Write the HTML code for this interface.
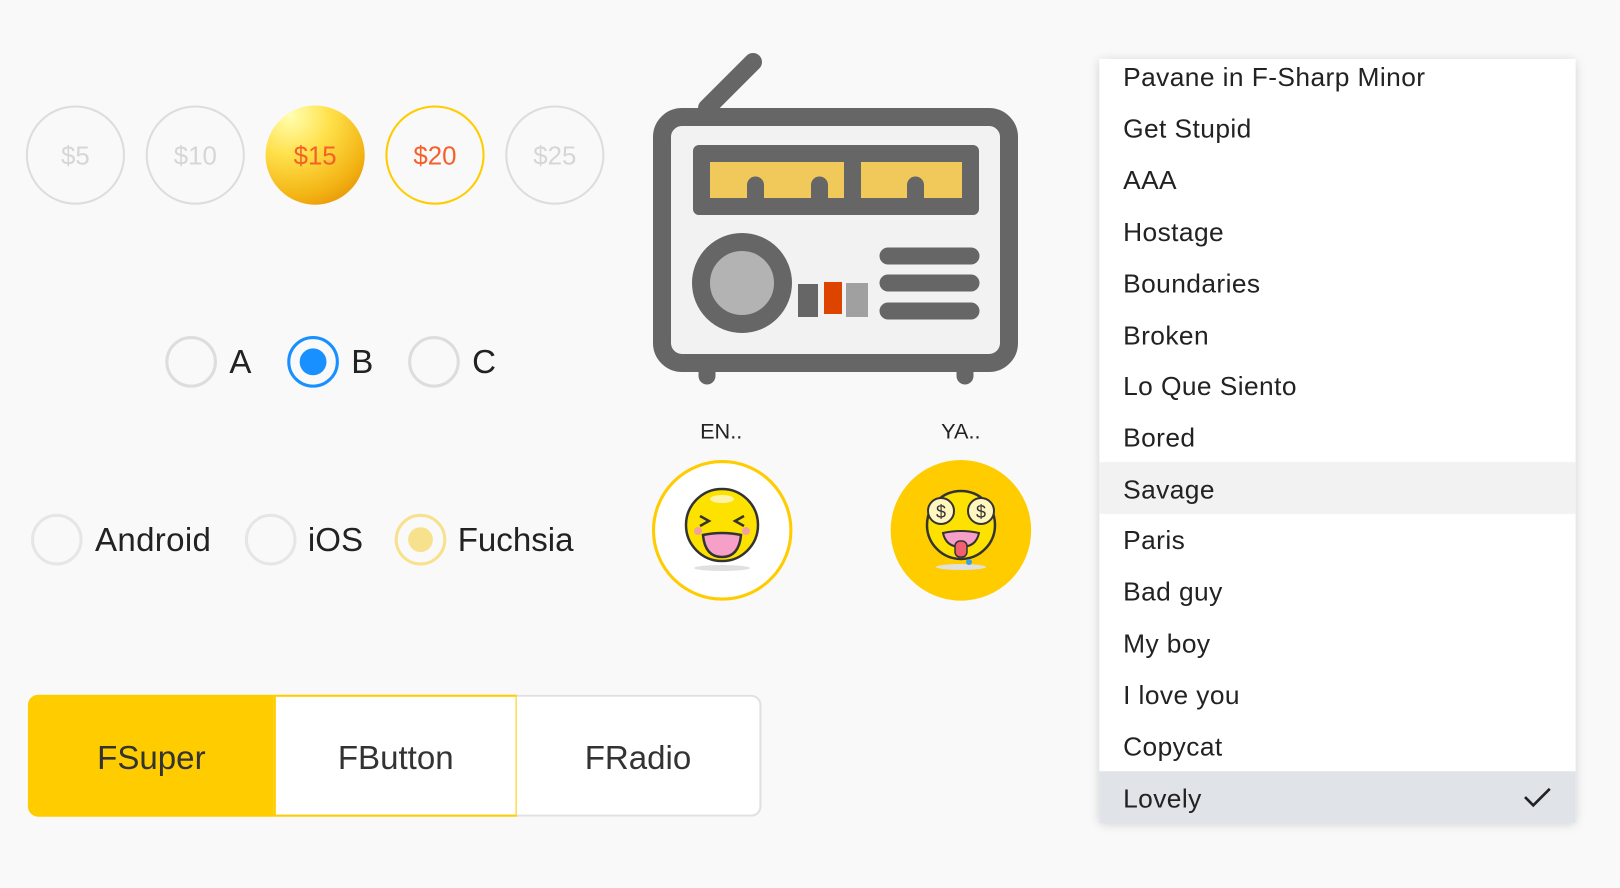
<!DOCTYPE html>
<html><head><meta charset="utf-8"><style>
html,body{margin:0;padding:0;width:1620px;height:888px;overflow:hidden;background:#f9f9f9;font-family:"Liberation Sans",Arial,sans-serif;}
#w{position:absolute;left:0;top:0;width:1568px;height:859px;transform:scale(1.0332,1.0338);transform-origin:0 0;}
.a{position:absolute;box-sizing:border-box;}
.coin{width:96px;height:96px;border-radius:50%;border:2px solid #ddd;top:102px;display:flex;align-items:center;justify-content:center;font-size:25px;color:#d6d6d6;padding-top:3px;}
.rd{width:50px;height:50px;border-radius:50%;border:3px solid #ddd;}
.lb{font-size:32px;color:#222;line-height:1;}
.it{position:absolute;left:0;width:461px;height:50px;line-height:50px;padding-left:23px;box-sizing:border-box;font-size:25.5px;letter-spacing:0.4px;color:#222;}
.bt{top:672px;height:118px;display:flex;align-items:center;justify-content:center;font-size:32px;color:#333;padding-top:4px;}
</style></head><body>
<div id="w">
<div class="a coin" style="left:25px">$5</div>
<div class="a coin" style="left:141px">$10</div>
<div class="a coin" style="left:257px;border:none;background:radial-gradient(circle at 25% 10%,#ffffb0 0%,#ffe04a 35%,#f3b414 70%,#de8000 100%);color:#f5602a">$15</div>
<div class="a coin" style="left:373px;border:2px solid #fc0;color:#f5602a">$20</div>
<div class="a coin" style="left:489px">$25</div>

<div class="a rd" style="left:160px;top:325px"></div><div class="a lb" style="left:222px;top:334px">A</div>
<div class="a rd" style="left:278px;top:325px;border-color:#1890ff"><div class="a" style="left:9px;top:9px;width:26px;height:26px;border-radius:50%;background:#1890ff"></div></div><div class="a lb" style="left:340px;top:334px">B</div>
<div class="a rd" style="left:395px;top:325px"></div><div class="a lb" style="left:457px;top:334px">C</div>

<div class="a rd" style="left:30px;top:497px;border-color:#e6e6e6"></div><div class="a lb" style="left:92px;top:506px;font-size:32px;letter-spacing:0.3px">Android</div>
<div class="a rd" style="left:237px;top:497px;border-color:#e6e6e6"></div><div class="a lb" style="left:298px;top:506px;font-size:32px">iOS</div>
<div class="a rd" style="left:382px;top:497px;border-color:#f8e18d"><div class="a" style="left:10px;top:10px;width:24px;height:24px;border-radius:50%;background:#f8e18d"></div></div><div class="a lb" style="left:443px;top:506px;font-size:32px">Fuchsia</div>

<div class="a" style="left:648px;top:406px;width:100px;text-align:center;font-size:21px;color:#222">EN..</div>
<div class="a" style="left:880px;top:406px;width:100px;text-align:center;font-size:21px;color:#222">YA..</div>
<div class="a" style="left:631px;top:445px;width:136px;height:136px;border-radius:50%;border:3px solid #fc0;background:#fff"></div>
<div class="a" style="left:862px;top:445px;width:136px;height:136px;border-radius:50%;background:#fc0"></div>

<div class="a bt" style="left:27px;width:239px;background:#fc0;border-radius:10px 0 0 10px;color:#333">FSuper</div>
<div class="a bt" style="left:265px;width:236px;background:#fff;border:2px solid #fc0">FButton</div>
<div class="a bt" style="left:500px;width:237px;background:#fff;border:2px solid #e0e0e0;border-left:none;border-radius:0 10px 10px 0">FRadio</div>

<div class="a" style="left:1064px;top:57px;width:461px;height:738px;background:#fff;box-shadow:0 2px 10px rgba(0,0,0,.18)">
<div class="it" style="top:-7px">Pavane in F-Sharp Minor</div>
<div class="it" style="top:43px">Get Stupid</div>
<div class="it" style="top:93px">AAA</div>
<div class="it" style="top:143px">Hostage</div>
<div class="it" style="top:193px">Boundaries</div>
<div class="it" style="top:243px">Broken</div>
<div class="it" style="top:292px">Lo Que Siento</div>
<div class="it" style="top:342px">Bored</div>
<div class="it" style="top:390px;background:#f2f2f2;line-height:54px">Savage</div>
<div class="it" style="top:441px">Paris</div>
<div class="it" style="top:491px">Bad guy</div>
<div class="it" style="top:541px">My boy</div>
<div class="it" style="top:591px">I love you</div>
<div class="it" style="top:641px">Copycat</div>
<div class="it" style="top:689px;background:#e0e3e8;line-height:54px">Lovely<svg style="position:absolute;left:410px;top:14px" width="28" height="22" viewBox="0 0 28 22"><path d="M2 11 L10 19 L26 3" fill="none" stroke="#222" stroke-width="2.6"/></svg></div>
</div>
</div>

<svg class="a" style="left:0;top:0" width="1620" height="888" viewBox="0 0 1620 888">
<line x1="753" y1="62" x2="707" y2="108" stroke="#666" stroke-width="18" stroke-linecap="round"/>
<rect x="662" y="117" width="347" height="246" rx="20" fill="#f2f2f2" stroke="#666" stroke-width="18"/>
<line x1="707" y1="370" x2="707" y2="376" stroke="#666" stroke-width="17" stroke-linecap="round"/>
<line x1="965" y1="370" x2="965" y2="376" stroke="#666" stroke-width="17" stroke-linecap="round"/>
<rect x="693" y="145" width="286" height="70" rx="6" fill="#666"/>
<rect x="710" y="162" width="134" height="36" fill="#f0c95a"/>
<rect x="861" y="162" width="101" height="36" fill="#f0c95a"/>
<path d="M747 198 V185 a8.5 8.5 0 0 1 17 0 V198 Z M811 198 V185 a8.5 8.5 0 0 1 17 0 V198 Z M907 198 V185 a8.5 8.5 0 0 1 17 0 V198 Z" fill="#666"/>
<circle cx="742" cy="283" r="41" fill="#b3b3b3" stroke="#666" stroke-width="18"/>
<rect x="798" y="284" width="20" height="33" fill="#666"/>
<rect x="824" y="282" width="18" height="32" fill="#dd4400"/>
<rect x="846" y="283" width="22" height="34" fill="#a0a0a0"/>
<g stroke="#666" stroke-width="17" stroke-linecap="round"><line x1="888" y1="256" x2="971" y2="256"/><line x1="888" y1="283" x2="971" y2="283"/><line x1="888" y1="311" x2="971" y2="311"/></g>
<g transform="translate(722,525)">
<ellipse cx="0" cy="43" rx="28" ry="3" fill="#e0e0e0"/>
<circle cx="0" cy="0" r="36" fill="#fde200" stroke="#333" stroke-width="2.5"/>
<ellipse cx="0" cy="-26" rx="12" ry="4" fill="#fff3a8"/>
<path d="M-22 -9 l9 5 l-9 5 M22 -9 l-9 5 l9 5" fill="none" stroke="#333" stroke-width="2.5"/>
<circle cx="-24" cy="6" r="4" fill="#f5a0a0"/><circle cx="24" cy="6" r="4" fill="#f5a0a0"/>
<path d="M-19 10 Q0 6 19 10 Q17 32 0 32 Q-17 32 -19 10 Z" fill="#f6a0c8" stroke="#333" stroke-width="2.5"/>
</g>
<g transform="translate(961,525)">
<ellipse cx="0" cy="42" rx="25" ry="3" fill="#e0e0e0"/>
<circle cx="0" cy="0" r="34" fill="#fde200" stroke="#333" stroke-width="2.5"/>
<circle cx="-20" cy="-14" r="13" fill="#fff6c0" stroke="#333" stroke-width="2"/>
<circle cx="20" cy="-14" r="13" fill="#fff6c0" stroke="#333" stroke-width="2"/>
<text x="-20" y="-7" text-anchor="middle" font-size="18" fill="#333" font-family="Liberation Sans">$</text>
<text x="20" y="-7" text-anchor="middle" font-size="18" fill="#333" font-family="Liberation Sans">$</text>
<path d="M-18 8 Q0 4 18 8 Q15 22 0 22 Q-15 22 -18 8 Z" fill="#f6a0c8" stroke="#333" stroke-width="2"/>
<rect x="-6" y="16" width="12" height="16" rx="5" fill="#f06070" stroke="#333" stroke-width="1.5"/>
<circle cx="8" cy="37" r="3" fill="#3aa0e0"/>
</g>
</svg>
</body></html>
